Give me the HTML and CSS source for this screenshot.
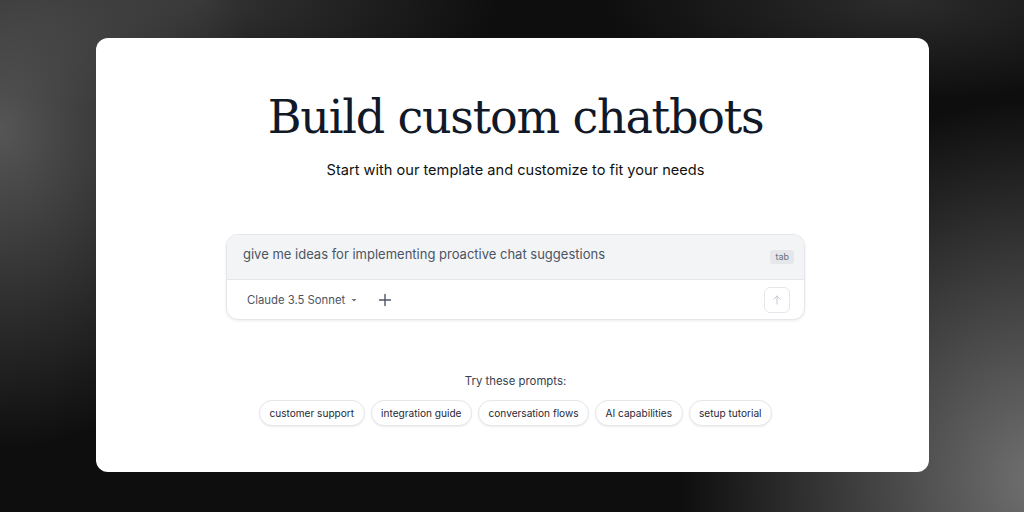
FILE: index.html
```html
<!DOCTYPE html>
<html>
<head>
<meta charset="utf-8">
<link rel="stylesheet" href="styles.css">
</head>
<body>
<div class="card">
  <h1 class="title">Build custom chatbots</h1>
  <p class="subtitle">Start with our template and customize to fit your needs</p>
  <div class="composer">
    <div class="composer-top">
      <span class="prompt-text">give me ideas for implementing proactive chat suggestions</span>
      <span class="tab-badge">tab</span>
    </div>
    <div class="composer-bottom">
      <div class="model">
        <span>Claude 3.5 Sonnet</span>
        <svg class="caret" width="8" height="8" viewBox="0 0 8 8"><path d="M1.5 3 L4 5.5 L6.5 3 Z" fill="#6b7280"/></svg>
      </div>
      <svg class="plus" width="14" height="14" viewBox="0 0 14 14"><path d="M7 1.5 V12.5 M1.5 7 H12.5" stroke="#4b5563" stroke-width="1.4" stroke-linecap="round"/></svg>
      <div class="send">
        <svg width="12" height="12" viewBox="0 0 12 12"><path d="M6 10 V2 M2.8 5.2 L6 2 L9.2 5.2" stroke="#c4c8cf" stroke-width="1" fill="none" stroke-linecap="round" stroke-linejoin="round"/></svg>
      </div>
    </div>
  </div>
  <p class="try">Try these prompts:</p>
  <div class="chips">
    <span class="chip">customer support</span>
    <span class="chip">integration guide</span>
    <span class="chip">conversation flows</span>
    <span class="chip">AI capabilities</span>
    <span class="chip">setup tutorial</span>
  </div>
</div>
</body>
</html>
```

FILE: styles.css
```css
* { box-sizing: border-box; }
html, body { margin: 0; height: 100%; }
body {
  width: 1024px;
  height: 512px;
  overflow: hidden;
  padding: 38px 95px 40px 96px;
  font-family: Inter, "Noto Sans", sans-serif;
  background:
    radial-gradient(ellipse 260px 320px at 0px 130px, rgba(110,110,110,0.75), rgba(110,110,110,0) 100%),
    radial-gradient(ellipse 360px 380px at 1040px 480px, rgba(130,130,130,0.85), rgba(130,130,130,0) 100%),
    radial-gradient(ellipse 300px 120px at 200px 0px, rgba(90,90,90,0.5), rgba(90,90,90,0) 100%),
    radial-gradient(ellipse 300px 100px at 900px 0px, rgba(80,80,80,0.45), rgba(80,80,80,0) 100%),
    #0e0e0e;
}
.card {
  width: 833px;
  height: 434px;
  background: #ffffff;
  border-radius: 12px;
  display: flex;
  flex-direction: column;
  align-items: center;
  padding: 49px 0 0 6px;
}
.title {
  margin: 0;
  font-family: "DejaVu Serif", Georgia, serif;
  font-weight: 400;
  font-size: 46px;
  line-height: 60px;
  color: #111827;
  letter-spacing: -1.2px;
}
.subtitle {
  margin: 12px 0 0;
  font-size: 14.6px;
  line-height: 22px;
  color: #111111;
}
.composer {
  margin-top: 53px;
  width: 579px;
  border: 1px solid #e5e7eb;
  border-radius: 12px;
  overflow: hidden;
  box-shadow: 0 1px 3px rgba(0,0,0,0.08);
  background: #fff;
}
.composer-top {
  height: 45px;
  background: #f3f4f6;
  border-bottom: 1px solid #e5e7eb;
  display: flex;
  align-items: center;
  justify-content: space-between;
  padding: 0 10px 0 16px;
}
.prompt-text {
  font-size: 13px;
  color: #4b5563;
  margin-top: -6px;
}
.tab-badge {
  font-size: 9px;
  line-height: 14px;
  padding: 0 5px;
  border-radius: 3px;
  background: #e5e7eb;
  color: #6b7280;
  margin-top: 0;
}
.composer-bottom {
  height: 39px;
  display: flex;
  align-items: center;
  padding: 0 14px 0 20px;
}
.model {
  display: flex;
  align-items: center;
  gap: 4px;
  font-size: 11.3px;
  color: #4b5563;
}
.caret { margin-left: 1px; }
.plus { margin-left: 20px; }
.send {
  margin-left: auto;
  width: 26px;
  height: 26px;
  border: 1px solid #e5e7eb;
  border-radius: 6px;
  display: flex;
  align-items: center;
  justify-content: center;
}
.try {
  margin: 51px 0 0;
  font-size: 11.4px;
  line-height: 20px;
  color: #374151;
}
.chips {
  margin-top: 9px;
  display: flex;
  gap: 6px;
}
.chip {
  height: 26px;
  display: flex;
  align-items: center;
  padding: 0 9.5px;
  border: 1px solid #e5e7eb;
  border-radius: 13px;
  box-shadow: 0 1px 2px rgba(0,0,0,0.08);
  font-size: 10.1px;
  color: #1f2937;
  background: #fff;
}
```
